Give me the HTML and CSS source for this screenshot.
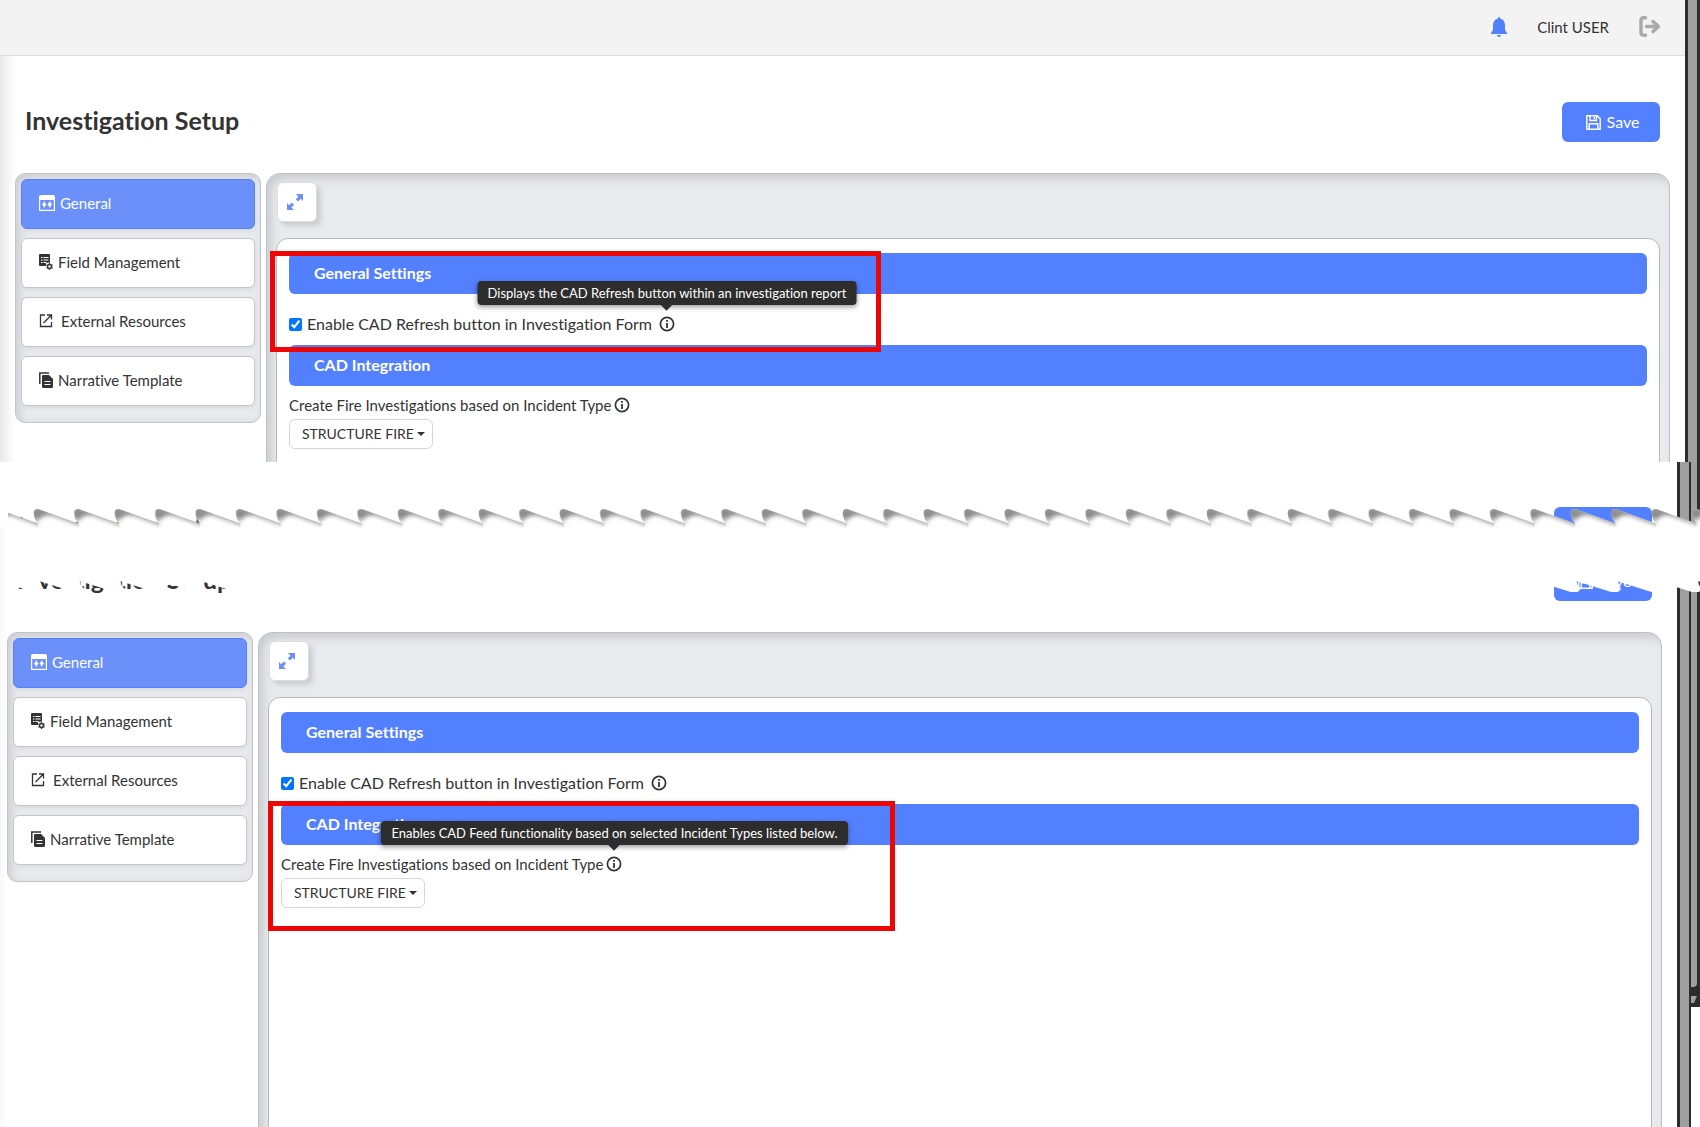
FILE: index.html
```
<!DOCTYPE html>
<html lang="en">
<head>
<meta charset="UTF-8">
<meta name="viewport" content="width=device-width, initial-scale=1.0">
<title>Investigation Setup</title>
<link rel="stylesheet" href="styles.css">
</head>
<body>

<!-- icon sprite -->
<svg class="sprite" aria-hidden="true">
  <symbol id="i-bell" viewBox="0 0 18 20"><path fill="currentColor" d="M9 0q1 0 1.100 1.400C13.500 2.200 14.800 4.500 15 8v5l2 3v1H1v-1l2-3V8C3.200 4.500 4.500 2.200 7.900 1.400Q8 0 9 0zM7 18h4q-.4 2-2 2t-2-2z"/></symbol>
  <symbol id="i-logout" viewBox="0 0 22 21"><path fill="none" stroke="currentColor" stroke-width="3.400" stroke-linecap="round" stroke-linejoin="round" d="M6.500 1.800H4.500Q2 1.800 2 4.500v12q0 2.700 2.500 2.700h2M7.500 10.500H19M14 5.500l5.500 5-5.500 5"/></symbol>
  <symbol id="i-save" viewBox="0 0 15 15"><path fill="none" stroke="currentColor" stroke-width="1.400" d="M.8.8h10.400l3 3v10.400H.8zM4 .8v4.700h6.500V.8M3.200 14V8.800h8.600V14M8.300 2v2.300"/></symbol>
  <symbol id="i-general" viewBox="0 0 16 16"><path fill="none" stroke="currentColor" stroke-width="1.200" d="M.6 1.600h14.800v13.800H.6z"/><path fill="currentColor" d="M0 2q0-2 2-2h12q2 0 2 2v3H0zM4.700 6.500h1.200v1L7.500 9.500 5.900 11.500v1H4.700v-1L3 9.500l1.700-2zM10.100 6.500h1.200v1L13 9.500l-1.700 2v1h-1.200v-1L8.500 9.500l1.600-2z"/></symbol>
  <symbol id="i-field" viewBox="0 0 14 16"><path fill="currentColor" d="M1 0h9q1 0 1 1v7.500L7 9v3H1q-1 0-1-1V1q0-1 1-1z"/><path stroke="#fff" stroke-width="1" d="M2 3.500h1.500M4.500 3.500h5M2 6h1.500M4.500 6h5M2 8.500h1.500M4.500 8.500h3"/><circle cx="10.500" cy="12.500" r="2" fill="none" stroke="currentColor" stroke-width="1.500"/><path stroke="currentColor" stroke-width="1.200" d="M10.500 9v1.500M10.500 14.500V16M7.500 10.700l1.300.8M12.200 13.500l1.400.8M7.500 14.300l1.300-.8M12.200 11.500l1.400-.8"/></symbol>
  <symbol id="i-external" viewBox="0 0 14 14"><path fill="none" stroke="currentColor" stroke-width="1.300" d="M6 1H1.500v11.500H12.500V8M8 1h4.500v4.500M12.500 1L4.500 9"/></symbol>
  <symbol id="i-template" viewBox="0 0 14 16"><path fill="none" stroke="currentColor" stroke-width="1.500" d="M.8 12V1H10"/><path fill="currentColor" d="M4 3h6l4 4v7.500q0 1.500-1.500 1.500H4.500Q3 16 3 14.500V4q0-1 1-1z"/><path stroke="#fff" stroke-width="1.200" d="M5.500 9.500h6M5.500 12.500h6"/></symbol>
  <symbol id="i-expand" viewBox="0 0 16 16"><path fill="currentColor" d="M9 0h7v7l-2.200-2.200L11 7.600 8.800 5.400l2.500-2.700zM0 9l2.200 2.200L4.800 8.600 7 10.800 4.300 13.500 7 16H0z"/></symbol>
  <symbol id="i-info" viewBox="0 0 16 16"><circle cx="8" cy="8" r="6.600" fill="none" stroke="currentColor" stroke-width="1.700"/><path fill="currentColor" d="M7.100 4h1.800v1.800H7.100zM7.100 7h1.800v5H7.100z"/></symbol>
</svg>

<section class="shot first">
  <div class="view">
    <header class="topbar">
      <button class="bell" aria-label="Notifications"><svg width="18" height="20"><use href="#i-bell"/></svg></button>
      <span class="user">Clint USER</span>
      <button class="logout" aria-label="Log out"><svg width="22" height="21"><use href="#i-logout"/></svg></button>
    </header>
    <div class="content">
      <div class="title-row">
        <h1>Investigation Setup</h1>
        <button class="save"><svg width="15" height="15"><use href="#i-save"/></svg>Save</button>
      </div>
      <div class="columns">
        <nav class="sidebar">
          <a class="item active" href="#"><svg width="16" height="16"><use href="#i-general"/></svg>General</a>
          <a class="item" href="#"><svg width="14" height="16"><use href="#i-field"/></svg>Field Management</a>
          <a class="item external" href="#"><svg width="14" height="14"><use href="#i-external"/></svg>External Resources</a>
          <a class="item" href="#"><svg width="14" height="16"><use href="#i-template"/></svg>Narrative Template</a>
        </nav>
        <main class="panel">
          <button class="expand" aria-label="Expand"><svg width="16" height="16"><use href="#i-expand"/></svg></button>
          <div class="card">
            <h2>General Settings</h2>
            <div class="check-row">
              <input type="checkbox" id="refresh1" checked>
              <label for="refresh1">Enable CAD Refresh button in Investigation Form</label>
              <span class="info"><svg width="16" height="16"><use href="#i-info"/></svg>
                <span class="tooltip" role="tooltip">Displays the CAD Refresh button within an investigation report</span>
              </span>
            </div>
            <h2>CAD Integration</h2>
            <div class="type-row">
              <label for="type1">Create Fire Investigations based on Incident Type</label>
              <span class="info"><svg width="16" height="16"><use href="#i-info"/></svg></span>
            </div>
            <div class="picker">
              <select id="type1"><option>STRUCTURE FIRE</option></select>
            </div>
          </div>
        </main>
      </div>
    </div>
    <div class="marker marker-refresh"></div>
  </div>
  <div class="scrollbar"><div class="thumb"></div></div>
</section>

<section class="shot second">
  <div class="view">
    <div class="strip" aria-hidden="true">
      <div class="title-row">
        <h1>Investigation Setup</h1>
        <button class="save" tabindex="-1"></button>
      </div>
    </div>
    <div class="content">
      <div class="title-row">
        <h1>Investigation Setup</h1>
        <button class="save"><svg width="15" height="15"><use href="#i-save"/></svg>Save</button>
      </div>
      <div class="columns">
        <nav class="sidebar">
          <a class="item active" href="#"><svg width="16" height="16"><use href="#i-general"/></svg>General</a>
          <a class="item" href="#"><svg width="14" height="16"><use href="#i-field"/></svg>Field Management</a>
          <a class="item external" href="#"><svg width="14" height="14"><use href="#i-external"/></svg>External Resources</a>
          <a class="item" href="#"><svg width="14" height="16"><use href="#i-template"/></svg>Narrative Template</a>
        </nav>
        <main class="panel">
          <button class="expand" aria-label="Expand"><svg width="16" height="16"><use href="#i-expand"/></svg></button>
          <div class="card">
            <h2>General Settings</h2>
            <div class="check-row">
              <input type="checkbox" id="refresh2" checked>
              <label for="refresh2">Enable CAD Refresh button in Investigation Form</label>
              <span class="info"><svg width="16" height="16"><use href="#i-info"/></svg></span>
            </div>
            <h2>CAD Integration</h2>
            <div class="type-row">
              <label for="type2">Create Fire Investigations based on Incident Type</label>
              <span class="info"><svg width="16" height="16"><use href="#i-info"/></svg>
                <span class="tooltip" role="tooltip">Enables CAD Feed functionality based on selected Incident Types listed below.</span>
              </span>
            </div>
            <div class="picker">
              <select id="type2"><option>STRUCTURE FIRE</option></select>
            </div>
          </div>
        </main>
      </div>
    </div>
    <div class="marker marker-type"></div>
  </div>
  <div class="scrollbar inner"><div class="thumb"></div></div>
  <div class="scrollbar outer"><div class="thumb"></div><div class="arrow"></div></div>

  <!-- torn paper edge -->
  <svg class="tear" aria-hidden="true">
    <defs>
      <filter id="soft" x="-20%" y="-50%" width="140%" height="200%"><feGaussianBlur stdDeviation="2"/></filter>
      <clipPath id="tooth"><path d="M4 0L44.450 14.500V21H4V14.500Q-1 9 0 2Q1 0 4 0z"/></clipPath>
      <g id="piece">
        <path fill="#fff" d="M4 0L44.450 14.500V21H4V14.500Q-1 9 0 2Q1 0 4 0z"/>
        <g clip-path="url(#tooth)">
          <path fill="#a0a0a0" filter="url(#soft)" d="M-37 -1L4 14.500Q-1 9 0 0L4 0L44.450 14.500L48 13L48 -12H-37z" transform="translate(1 2)"/>
          <path fill="#8c8c8c" filter="url(#soft)" d="M-2 0L5 -1L20 5Q9 5 5 11L-2 9z"/>
        </g>
        <path fill="#fff" d="M4 20.500H44.600L46 72L47 76L50 80L47 83H40L5 72V20z"/>
      </g>
      <pattern id="teeth" patternUnits="userSpaceOnUse" width="40.450" height="100" patternTransform="translate(26 9)">
        <use href="#piece" x="-40.450"/>
        <use href="#piece"/>
        <use href="#piece" x="40.450"/>
      </pattern>
    </defs>
    <rect width="100%" height="100" fill="url(#teeth)"/>
    <rect y="28" width="100%" height="52" fill="#fff"/>
  </svg>
</section>

</body>
</html>
```
FILE: styles.css
```
* {
    box-sizing: border-box;
}

body {
    margin: 0;
    height: 100vh;
    display: flex;
    flex-direction: column;
    overflow: hidden;
    background: #fff;
    color: #333;
    font: 15px/24px Lato, "Liberation Sans", sans-serif;
    font-variant-ligatures: none;
}

button,
select {
    font: inherit;
    font-variant-ligatures: none;
    color: inherit;
}

svg {
    flex: none;
    display: block;
}

.sprite {
    position: absolute;
    width: 0;
    height: 0;
}

/* the two captures */
.shot {
    position: relative;
    display: flex;
}

.first {
    flex: none;
    height: 462px;
    overflow: hidden;
}

.second {
    flex: 1;
    min-height: 0;
}

.view {
    position: relative;
    flex: 1;
    min-width: 0;
    overflow: hidden;
}

.topbar {
    display: flex;
    align-items: center;
    justify-content: flex-end;
    height: 56px;
    padding: 0 24px 2px;
    background: #f3f3f3;
    border-bottom: 1px solid #dedede;
}

.topbar button {
    padding: 0;
    border: 0;
    background: none;
}

.bell {
    color: #5380ff;
}

.user {
    margin: 0 30px 0 29px;
}

.logout {
    color: #a9a9a9;
}

.content {
    padding: 46px 15px 0;
    background: linear-gradient(to right, #e9e9e9, #fff 15px);
}

.second .content {
    padding: 34px 15px 0 7px;
    background: linear-gradient(to right, #f9f9f9, #fff 7px);
}

.strip {
    height: 65px;
    padding: 45px 15px 0 7px;
    overflow: hidden;
}

.title-row {
    display: flex;
    justify-content: space-between;
    height: 71px;
    padding: 0 10px;
}

h1 {
    margin: 0;
    font-size: 25px;
    line-height: 36px;
    font-weight: 700;
}

.save {
    display: flex;
    align-items: center;
    justify-content: center;
    gap: 6px;
    width: 98px;
    height: 40px;
    padding: 0 0 0 3px;
    border: 0;
    border-radius: 6px;
    background: #5380ff;
    color: #fff;
    font-size: 16px;
}

.columns {
    display: flex;
    align-items: flex-start;
    gap: 5px;
}

.sidebar {
    flex: none;
    width: 246px;
    padding: 5px 5px 7px;
    border: 1px solid #c3c4c8;
    border-radius: 10px;
    background: #e9eaee;
    box-shadow: inset 3px 3px 8px #c9cacf;
}

.item {
    display: flex;
    align-items: center;
    gap: 5px;
    height: 50px;
    margin-bottom: 9px;
    padding: 0 17px 2px;
    border: 1px solid #c6c6ca;
    border-radius: 6px;
    background: #fff;
    color: #333;
    text-decoration: none;
    box-shadow: 0 2px 4px #d9dade;
}

.external {
    gap: 8px;
}

.active {
    background: #6b90fa;
    border-color: #5380ff;
    color: #fff;
}

.panel {
    flex: 1;
    min-height: 1000px;
    padding: 8px 9px;
    border: 1px solid #bfc0c4;
    border-radius: 14px;
    background: #e9eaee;
    box-shadow: inset 5px 5px 8px #cbccd1;
}

.expand {
    display: flex;
    align-items: center;
    justify-content: center;
    width: 40px;
    height: 40px;
    margin: 0 0 16px 1px;
    padding: 0 4px 0 0;
    border: 1px solid #ddd;
    border-radius: 6px;
    background: #fff;
    color: #6b90fa;
    box-shadow: 4px 4px 5px #cbccd1;
}

.card {
    min-height: 1000px;
    padding: 14px 12px;
    border: 1px solid #b8b9bc;
    border-radius: 12px;
    background: #fff;
}

h2 {
    margin: 0;
    padding: 0 25px 2px;
    border-radius: 6px;
    background: #5380ff;
    color: #fff;
    font-size: 16px;
    line-height: 39px;
    font-weight: 700;
}

.check-row {
    display: flex;
    align-items: center;
    padding: 18px 0 9px;
    font-size: 16px;
}

.check-row input {
    width: 13px;
    height: 13px;
    margin: 0 5px 0 0;
}

.check-row .info {
    margin-left: 7px;
}

.type-row {
    display: flex;
    align-items: center;
    gap: 3px;
    padding: 7px 0 2px;
}

.info {
    position: relative;
}

.tooltip {
    position: absolute;
    bottom: 27px;
    left: 50%;
    transform: translateX(-50%);
    padding: 0 10px;
    border-radius: 4px;
    background: #2d2d2d;
    color: #fff;
    font-size: 14px;
    line-height: 24px;
    white-space: nowrap;
    box-shadow: 0 2px 5px #0006;
}

.check-row .tooltip,
.type-row .tooltip {
    font-size: 13px;
}

.tooltip::after {
    content: "";
    position: absolute;
    left: 50%;
    bottom: -4px;
    width: 8px;
    height: 8px;
    margin-left: -4px;
    background: #2d2d2d;
    transform: rotate(45deg);
}

.picker {
    position: relative;
    width: 144px;
}

.picker::after {
    content: "";
    position: absolute;
    top: 13px;
    right: 8px;
    border: 4px solid transparent;
    border-top-color: #333;
    border-bottom: 0;
    pointer-events: none;
}

select {
    display: block;
    appearance: none;
    width: 100%;
    height: 30px;
    padding: 0 12px;
    border: 1px solid #d5d5d5;
    border-radius: 6px;
    background: #fff;
    font-size: 14px;
}

/* red callout boxes drawn over the captures */
.marker {
    position: absolute;
    border: 5px solid #ec0606;
    pointer-events: none;
}

.marker-refresh {
    top: 251px;
    left: 270px;
    width: 611px;
    height: 101px;
}

.marker-type {
    top: 339px;
    left: 268px;
    width: 627px;
    height: 130px;
}

.scrollbar {
    flex: none;
    width: 15px;
    padding: 0 3px;
    background: #2d2d2d;
}

.thumb {
    height: 100%;
    background: #9f9f9f;
}

.inner {
    width: 14px;
    padding: 0 2px 0 3px;
}

.outer {
    width: 9px;
    height: 545px;
    padding: 0 3px 0 0;
}

.outer .thumb {
    height: 525px;
    border-bottom-right-radius: 4px;
}

.arrow {
    height: 7px;
    margin-top: 9px;
    background: #9f9f9f;
    clip-path: polygon(0 0, 100% 0, 50% 100%, 0 100%);
}

.tear {
    position: absolute;
    top: 38px;
    left: 8px;
    width: calc(100% - 8px);
    height: 100px;
}
```
